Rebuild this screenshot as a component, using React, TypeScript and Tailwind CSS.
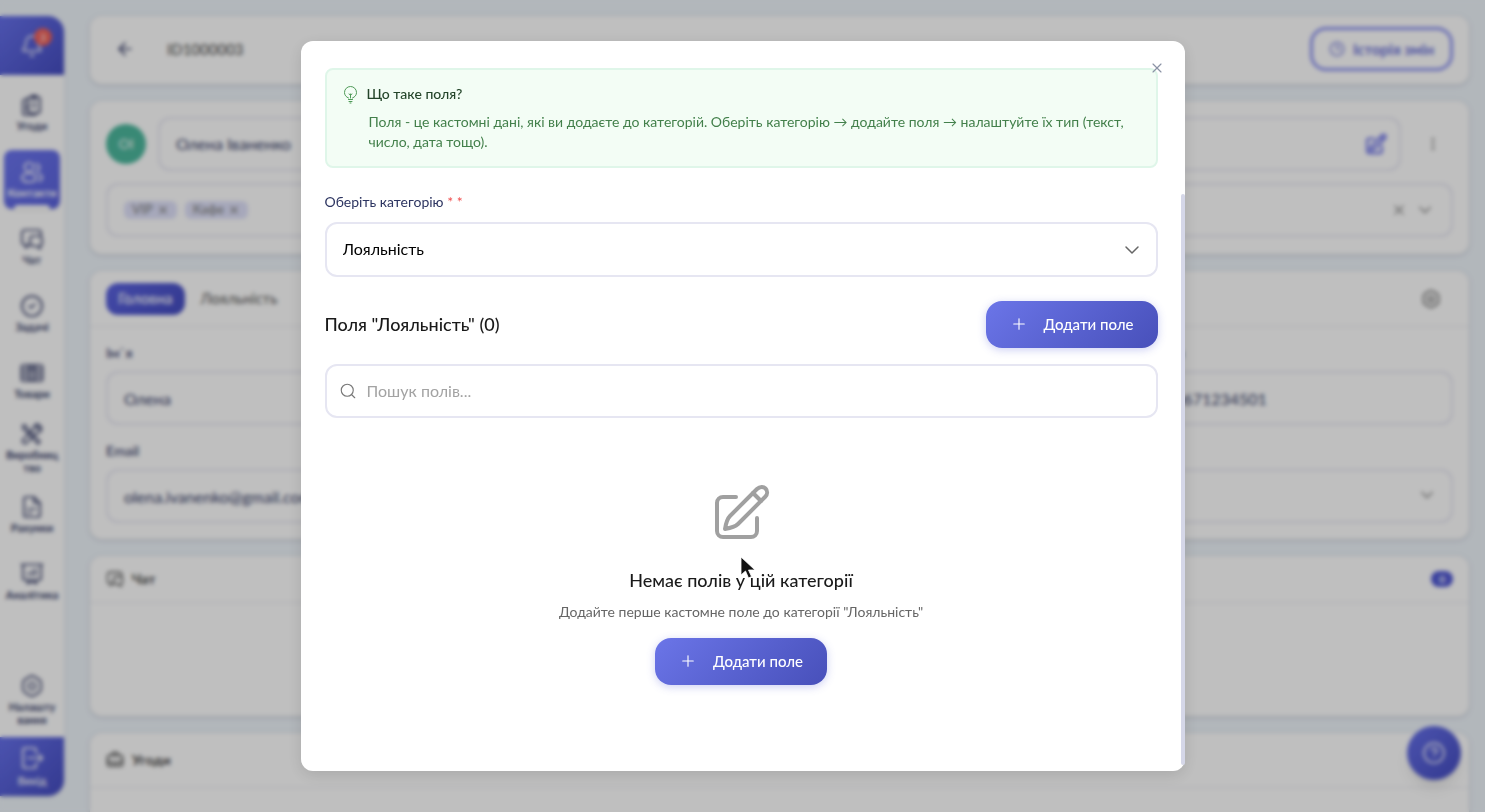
import type { ReactNode } from "react";
import {
  ArrowLeft,
  Bell,
  BriefcaseBusiness,
  ChevronDown,
  CircleCheck,
  CircleQuestionMark,
  Clock3,
  EllipsisVertical,
  Plus,
  Search,
  X,
} from "lucide-react";

type IconName =
  | "deals"
  | "contacts"
  | "chat"
  | "goods"
  | "production"
  | "invoices"
  | "analytics"
  | "settings"
  | "exit";

const navItems: { label: string[]; icon: ReactNode; active?: boolean }[] = [
  { label: ["Угоди"], icon: <Icon name="deals" /> },
  { label: ["Контакти"], icon: <Icon name="contacts" />, active: true },
  { label: ["Чат"], icon: <Icon name="chat" /> },
  { label: ["Задачі"], icon: <CircleCheck className="size-6" strokeWidth={1.75} /> },
  { label: ["Товари"], icon: <Icon name="goods" /> },
  { label: ["Виробниц", "тво"], icon: <Icon name="production" /> },
  { label: ["Рахунки"], icon: <Icon name="invoices" /> },
  { label: ["Аналітика"], icon: <Icon name="analytics" /> },
];

export default function App() {
  return (
    <div className="relative h-screen overflow-hidden bg-[#eef4fa] font-[Lato,'Open_Sans',sans-serif] text-[#363d68]">
      <div className="flex h-full">
        <Sidebar />
        <ContactPage />
      </div>
      <button
        aria-label="Допомога"
        className="absolute right-6 bottom-8 flex size-[54px] items-center justify-center rounded-full bg-linear-135 from-[#6670ea] to-[#454cc0] text-white shadow-lg"
      >
        <CircleQuestionMark className="size-6" strokeWidth={1.5} />
      </button>
      <FieldsModal />
    </div>
  );
}

function Sidebar() {
  return (
    <nav className="my-4 flex w-16 shrink-0 flex-col rounded-r-2xl bg-white shadow-sm">
      <button
        aria-label="Сповіщення"
        className="relative flex h-[59px] shrink-0 items-center justify-center rounded-tr-2xl bg-linear-135 from-[#6670ea] to-[#454cc0] text-white"
      >
        <Bell className="size-6" strokeWidth={1.5} />
        <span className="absolute top-3 right-3 flex size-[18px] items-center justify-center rounded-full bg-[#f0625a] text-[10px]">
          3
        </span>
      </button>
      <div className="mt-2 flex flex-1 flex-col gap-2">
        {navItems.map((item) => (
          <NavLink key={item.label[0]} {...item} />
        ))}
      </div>
      <NavLink label={["Налашту", "вання"]} icon={<Icon name="settings" />} />
      <a
        href="#exit"
        className="mt-2 flex h-[59px] shrink-0 flex-col items-center justify-center gap-1 rounded-br-2xl bg-linear-135 from-[#6670ea] to-[#454cc0] text-[11px] leading-[13px] font-semibold text-white"
      >
        <Icon name="exit" />
        Вихід
      </a>
    </nav>
  );
}

function NavLink({ label, icon, active }: { label: string[]; icon: ReactNode; active?: boolean }) {
  return (
    <a
      href="#nav"
      className={`relative mx-1 flex h-[59px] shrink-0 flex-col items-center justify-center gap-0.5 rounded-lg text-[11px] leading-[13px] font-bold ${
        active ? "bg-linear-135 from-[#6b74ee] to-[#5a62dc] text-white shadow" : ""
      }`}
    >
      {icon}
      <span className="text-center">
        {label[0]}
        {label[1] && <br />}
        {label[1]}
      </span>
      {active && <span className="absolute inset-x-2.5 bottom-0 h-1 rounded-t bg-white" />}
    </a>
  );
}

function Card({ className = "", children }: { className?: string; children?: ReactNode }) {
  return (
    <section className={`shrink-0 rounded-xl bg-white shadow-[0_1px_4px_rgba(30,35,60,0.2)] ${className}`}>
      {children}
    </section>
  );
}

const box = "w-full rounded-xl border-2 border-[#e6e6f2] bg-white";

function ContactPage() {
  return (
    <main className="ml-[26px] flex min-w-0 flex-1 flex-col gap-[17px] pt-4 pr-4">
      <Card className="flex h-[68px] items-center pr-4 pb-0.5 pl-[25px]">
        <button aria-label="Назад">
          <ArrowLeft className="size-5" />
        </button>
        <h1 className="ml-8 text-[15px] font-medium text-[#555]">ID1000003</h1>
        <button className="ml-auto flex h-11 items-center gap-2 rounded-2xl border-3 border-[#8a90f0] px-4 text-[15px] font-bold text-[#6a70d8]">
          <Clock3 className="size-4" />
          Історія змін
        </button>
      </Card>

      <Card className="flex flex-col gap-3 px-4 pt-4 pb-[17px]">
        <div className="flex items-center gap-3">
          <span className="flex size-10 shrink-0 items-center justify-center rounded-full bg-[#4cb79d] text-sm text-white">
            ОІ
          </span>
          <div className={`flex h-[54px] items-center pr-3 pl-4 ${box}`}>
            <input aria-label="Ім'я контакту" defaultValue="Олена Іваненко" className="min-w-0 flex-1 outline-none" />
            <button aria-label="Редагувати" className="text-[#6a70e8]">
              <EditIcon className="size-[22px]" strokeWidth={6} />
            </button>
          </div>
          <button aria-label="Більше" className="mx-3 text-[#777]">
            <EllipsisVertical className="size-4" />
          </button>
        </div>
        <div className={`flex h-[54px] items-center gap-2 px-4 text-[#888] ${box}`}>
          <Tag>VIP</Tag>
          <Tag>Кафе</Tag>
          <button aria-label="Очистити" className="ml-auto">
            <X className="size-4" />
          </button>
          <button aria-label="Розгорнути">
            <ChevronDown className="size-5" />
          </button>
        </div>
      </Card>

      <Card className="pb-4">
        <div className="flex h-14 items-center border-b border-[#e8e8ee] px-4 text-[15px]">
          <button className="h-8 rounded-xl bg-linear-135 from-[#5b63e0] to-[#454cc0] px-3 font-medium text-white">
            Головна
          </button>
          <button className="px-4 font-medium text-[#666]">Лояльність</button>
          <button aria-label="Налаштування" className="ml-auto px-3 text-[#555]">
            <Icon name="settings" className="size-5" />
          </button>
        </div>
        <div className="grid grid-cols-4 gap-4 px-4 pt-4">
          <Field id="first-name" label="Ім`я" value="Олена" />
          <Field id="phone" label="Телефон" value="+380671234501" className="col-start-4" />
          <Field id="email" label="Email" value="olena.ivanenko@gmail.com" />
          <div className="relative col-start-4 self-end">
            <select aria-label="Відповідальний" className={`block h-[54px] appearance-none ${box}`} />
            <ChevronDown className="pointer-events-none absolute top-4 right-4 size-5 text-[#888]" />
          </div>
        </div>
      </Card>

      <Card className="h-40">
        <div className="flex h-[47px] items-center gap-2 border-b border-[#e8e8ee] px-4 text-sm font-bold text-[#444]">
          <Icon name="chat" className="size-[18px]" />
          Чат
          <span className="ml-auto rounded-lg bg-[#5058d4] px-2 text-[10px] leading-4 text-white">0</span>
        </div>
      </Card>

      <Card className="h-40">
        <div className="flex h-[55px] items-center gap-2 border-b border-[#e8e8ee] px-4 text-sm font-bold text-[#444]">
          <BriefcaseBusiness className="size-[18px]" />
          Угоди
        </div>
      </Card>
    </main>
  );
}

function Tag({ children }: { children: string }) {
  return (
    <span className="flex h-[18px] items-center gap-1 rounded-md bg-[#dfe1fa] px-2 text-[13px] font-semibold">
      {children}
      <X className="size-3" strokeWidth={3} />
    </span>
  );
}

interface FieldProps {
  id: string;
  label: string;
  value: string;
  className?: string;
}

function Field({ id, label, value, className = "" }: FieldProps) {
  return (
    <div className={`flex flex-col gap-2 ${className}`}>
      <label htmlFor={id} className="text-sm font-medium">
        {label}
      </label>
      <input id={id} defaultValue={value} className={`h-[54px] px-4 ${box}`} />
    </div>
  );
}

function FieldsModal() {
  return (
    <div className="absolute inset-0 flex items-center justify-center bg-black/25 backdrop-blur-[2px]">
      <div
        role="dialog"
        aria-modal="true"
        className="relative h-[90vh] w-full max-w-[884px] rounded-xl bg-white pt-[27px] pr-[27px] pl-6 shadow-[0_4px_16px_rgba(0,0,0,0.12)]"
      >
        <button aria-label="Закрити" className="absolute top-[19px] right-5 text-[#8b93a5]">
          <X className="size-4" strokeWidth={1.75} />
        </button>
        <span className="absolute top-[153px] right-0 bottom-1.5 w-1 rounded-full bg-[#d5d7e8]" />

        <div className="rounded-lg border-2 border-[#dff6e9] bg-[#f3fdf5] px-4 py-3.5">
          <div className="flex items-center gap-2">
            <BulbIcon className="h-5 w-4 text-[#4f9a58]" />
            <h3 className="text-sm font-medium text-[#24452a]">Що таке поля?</h3>
          </div>
          <p className="mt-2 pl-[26px] text-sm text-[#43804b]">
            Поля - це кастомні дані, які ви додаєте до категорій. Оберіть категорію → додайте поля → налаштуйте їх тип
            (текст, число, дата тощо).
          </p>
        </div>

        <label htmlFor="category" className="mt-6 block text-sm text-[#2d3561]">
          Оберіть категорію <span className="text-[#f05252]">* *</span>
        </label>
        <div className="relative mt-2.5">
          <select id="category" className={`block h-[55px] appearance-none px-4 text-black ${box}`}>
            <option>Лояльність</option>
          </select>
          <ChevronDown
            className="pointer-events-none absolute top-4 right-[14px] size-6 text-[#666]"
            strokeWidth={1.5}
          />
        </div>

        <div className="mt-6 flex items-center justify-between">
          <h2 className="text-lg font-medium text-[#1a1a1a]">Поля "Лояльність" (0)</h2>
          <AddButton />
        </div>

        <div className={`mt-4 flex h-[54px] items-center gap-2.5 px-3 ${box}`}>
          <Search className="size-[18px] text-[#777]" strokeWidth={1.5} />
          <input
            aria-label="Пошук полів"
            placeholder="Пошук полів..."
            className="flex-1 outline-none placeholder:text-[#a3a3a3]"
          />
        </div>

        <div className="flex flex-col items-center pt-16 text-center">
          <EditIcon className="size-[60px] text-[#a0a0a0]" />
          <h3 className="mt-6 text-lg font-medium text-[#1a1a1a]">Немає полів у цій категорії</h3>
          <p className="mt-2 mb-4 text-sm text-[#666]">Додайте перше кастомне поле до категорії "Лояльність"</p>
          <AddButton />
        </div>
      </div>
      <Cursor />
    </div>
  );
}

function AddButton() {
  return (
    <button className="flex h-[47px] items-center gap-4 rounded-2xl bg-linear-135 from-[#6b75e8] to-[#4850ba] px-6 text-[15px] font-medium text-white shadow-[0_2px_8px_rgba(90,98,220,0.3)]">
      <Plus className="size-[18px]" strokeWidth={1.5} />
      Додати поле
    </button>
  );
}

const iconPaths: Record<IconName, ReactNode> = {
  deals: (
    <>
      <path d="M7 5.500 5 6.500a2 2 0 0 0-2 2V20a2 2 0 0 0 2 2h9a2 2 0 0 0 2-2" />
      <rect x="8" y="4" width="12" height="16" rx="2" />
      <path d="M12 2.500h4v3h-4zM7 11v7M12 10h4M12 14h4" />
    </>
  ),
  contacts: (
    <>
      <circle cx="9" cy="7" r="4.500" />
      <path d="M2 18c0-3 3-4.500 7-4.500s7 1.500 7 4.500-3 4-7 4-7-1-7-4Z" />
      <path d="M16 4a3.500 3.500 0 0 1 0 7M18 14c3 .5 4 2 4 3.500S21 20.500 19 21" />
    </>
  ),
  chat: (
    <>
      <path d="M9 18H8l-2 3v-3H5a3 3 0 0 1-3-3V6a3 3 0 0 1 3-3h13a3 3 0 0 1 3 3v2" />
      <path d="M13 9h6a3 3 0 0 1 3 3v4a3 3 0 0 1-2 3v3l-3-3h-4a3 3 0 0 1-3-3v-4a3 3 0 0 1 3-3Z" />
    </>
  ),
  goods: (
    <>
      <rect x="1.500" y="4" width="21" height="16" rx="2" />
      <path d="M8.500 4v16M12 4v16M15.500 4v16M2 8h20M2 12h6M2 16h6M16 12h6M16 16h6" />
    </>
  ),
  production: (
    <>
      <path d="m3 3 3 .5L7.500 7 20 19.500 18 22 5.500 8.500 3 7Z" />
      <path d="M21 4.500 18 7l-1.500-1.500L19 2.500c-3-1-6 1-5.500 4.500L3 17.500A2.500 2.500 0 0 0 6.500 21L17 10.500c3.500.5 5.500-2.500 4-6Z" />
    </>
  ),
  invoices: (
    <>
      <path d="M14 2H6a2 2 0 0 0-2 2v16a2 2 0 0 0 2 2h12a2 2 0 0 0 2-2V8Z" />
      <path d="M14 2v6h6M8 14h8M8 18h3" />
    </>
  ),
  analytics: (
    <>
      <path d="M1.500 2.500h21M3 3v13a2 2 0 0 0 2 2h14a2 2 0 0 0 2-2V3M9 18l-1.500 4M15 18l1.500 4M8 20.500h8" />
      <path d="M8.500 13v-2M12 13V9M15.500 13V7" />
    </>
  ),
  settings: (
    <>
      <path d="M10 2.500a4 4 0 0 1 4 0l5 3a4 4 0 0 1 2 3.500v6a4 4 0 0 1-2 3.500l-5 3a4 4 0 0 1-4 0l-5-3A4 4 0 0 1 3 15V9a4 4 0 0 1 2-3.500Z" />
      <circle cx="12" cy="12" r="3.500" />
    </>
  ),
  exit: (
    <>
      <path d="M16 7V4a2 2 0 0 0-2-2H5a2 2 0 0 0-2 2v16a2 2 0 0 0 2 2h9a2 2 0 0 0 2-2v-3" />
      <path d="M8 12h14M19 8.500l3.500 3.500-3.500 3.500" />
    </>
  ),
};

function Icon({ name, className = "size-6" }: { name: IconName; className?: string }) {
  return (
    <svg
      viewBox="0 0 24 24"
      fill="none"
      stroke="currentColor"
      strokeWidth="1.700"
      strokeLinecap="round"
      strokeLinejoin="round"
      className={className}
    >
      {iconPaths[name]}
    </svg>
  );
}

function EditIcon({ className, strokeWidth = 4 }: { className: string; strokeWidth?: number }) {
  return (
    <svg
      viewBox="0 0 60 60"
      fill="none"
      stroke="currentColor"
      strokeWidth={strokeWidth}
      strokeLinecap="round"
      strokeLinejoin="round"
      className={className}
    >
      <path d="M25 15H12a6 6 0 0 0-6 6v28a6 6 0 0 0 6 6h28a6 6 0 0 0 6-6V36" />
      <path d="M14 47c1-6 2-10 5-13L46 7c6-6 14 2 8 8L27 42c-3 3-7 4-13 5Z" />
      <path d="m42 11 8 8" />
    </svg>
  );
}

function BulbIcon({ className }: { className: string }) {
  return (
    <svg viewBox="0 0 16 20" fill="none" stroke="currentColor" strokeLinecap="round" className={className}>
      <path d="M5.500 14C3 13 1.500 11 1.500 8.500a6 6 0 0 1 12 0c0 2.500-1.500 4.500-4 5.500" />
      <path d="M7.500 14v-4M6 10l1.500 1L9 10M5.500 15.500h4M6 17.500h3M7 19h1" />
    </svg>
  );
}

function Cursor() {
  return (
    <svg viewBox="0 0 16 24" className="pointer-events-none absolute top-[556px] left-[740px] h-6 w-4">
      <path d="M1 1v18l4.500-4 3 7 3-1.500-3-6.500H15Z" fill="#111" stroke="#fff" strokeWidth=".8" />
    </svg>
  );
}
